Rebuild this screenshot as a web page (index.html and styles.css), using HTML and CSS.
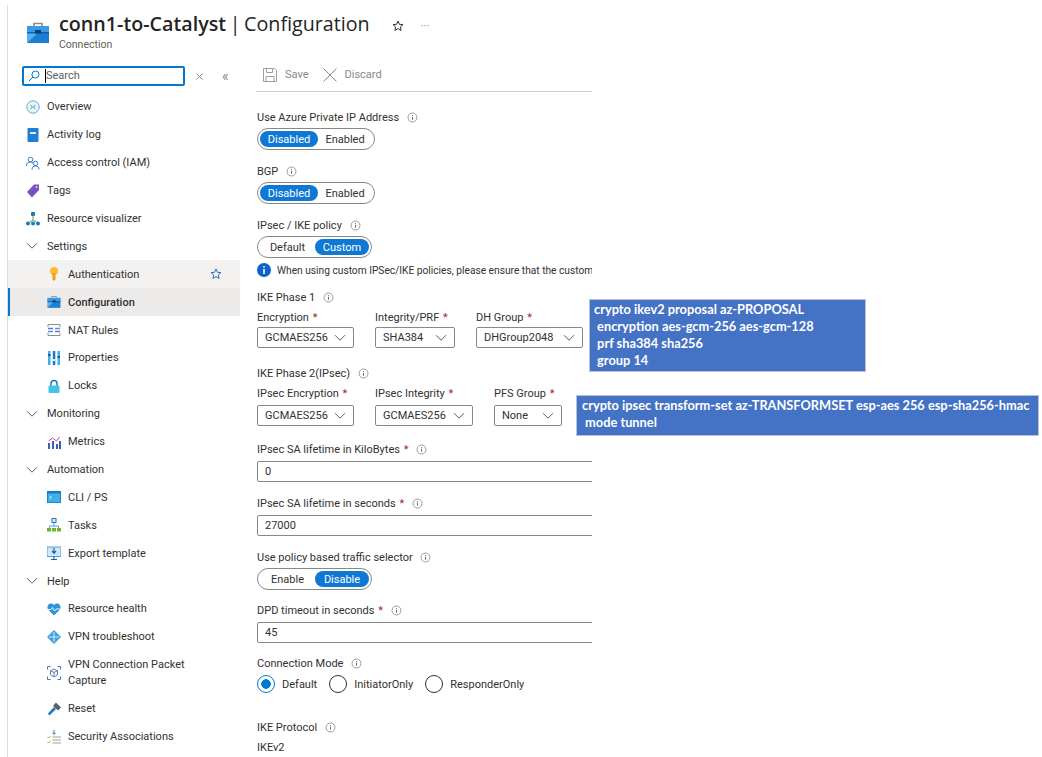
FILE: index.html
```html
<!DOCTYPE html>
<html lang="en">
<head>
    <meta charset="UTF-8">
    <title>conn1-to-Catalyst | Configuration</title>
    <link rel="stylesheet" href="styles.css">
</head>
<body>
    <!-- shared small icons -->
    <svg class="defs" width="0" height="0">
        <symbol id="info" viewBox="0 0 12 12">
            <circle cx="6" cy="6" r="4.900" fill="none" stroke="#8a8886" stroke-width="0.900"/>
            <path d="M6 5.200v3.200M6 3.400v.9" stroke="#605e5c" stroke-width="1"/>
        </symbol>
        <symbol id="chev" viewBox="0 0 12 8">
            <path d="M1 1.200l5 5 5-5" fill="none" stroke="#605e5c" stroke-width="1"/>
        </symbol>
        <symbol id="case" viewBox="0 0 24 24">
            <path d="M8 5V2.500h8V5" fill="none" stroke="#8a8f96" stroke-width="1.600"/>
            <rect x="1" y="5" width="22" height="17" fill="#1b7fd4"/>
            <rect x="1" y="5" width="22" height="6" fill="#3a9ae6"/>
            <path d="M1 11h22v1.500H1z" fill="#0f5fa8"/>
            <path d="M1 22l10-9.500H1z" fill="#6bbcf0" opacity="0.800"/>
            <rect x="9" y="9" width="6" height="3.500" fill="#0b3f70"/>
        </symbol>
    </svg>

    <div class="blade">
        <header class="head">
            <svg class="head-icon" width="24" height="24"><use href="#case"/></svg>
            <div>
                <h1 class="title"><b>conn1-to-Catalyst</b> | Configuration</h1>
                <div class="subtitle">Connection</div>
            </div>
            <svg class="head-star" width="12" height="12" viewBox="0 0 12 12"><path d="M6 1l1.400 3.300 3.600.3-2.700 2.400.8 3.500L6 8.600 2.900 10.500l.8-3.500L1 4.600l3.600-.3z" fill="none" stroke="#323130" stroke-width="1"/></svg>
            <span class="head-more">···</span>
        </header>

        <div class="columns">
            <nav class="side">
                <div class="search-row">
                    <div class="search">
                        <svg width="12" height="12" viewBox="0 0 12 12"><circle cx="7.500" cy="4.500" r="3.500" fill="none" stroke="#0078d4"/><path d="M5 7l-4 4" stroke="#0078d4"/></svg>
                        <span class="search-text">Search</span>
                    </div>
                    <svg class="search-x" width="7" height="7" viewBox="0 0 7 7"><path d="M.5.5l6 6M6.500.5l-6 6" stroke="#8a8886"/></svg>
                    <span class="collapse">«</span>
                </div>

                <a class="item">
                    <svg width="14" height="14" viewBox="0 0 14 14"><circle cx="7" cy="7" r="6.200" fill="#eaf5fc" stroke="#5ea9dd"/><path d="M4.500 5l2 2-2 2" fill="none" stroke="#3fa63f"/><path d="M9.500 5l-2 2 2 2" fill="none" stroke="#3b8fd1"/></svg>
                    Overview
                </a>
                <a class="item">
                    <svg width="14" height="14" viewBox="0 0 14 14"><rect x="1.500" width="11" height="14" rx="1" fill="#1f7fd0"/><rect x="4" y="4" width="6" height="2" fill="#d8ecfa"/></svg>
                    Activity log
                </a>
                <a class="item">
                    <svg width="14" height="14" viewBox="0 0 14 14"><g fill="none" stroke="#2f7fc9"><circle cx="4.500" cy="3.500" r="2.300"/><path d="M.5 10c0-3 1.500-4 4-4 1 0 2 .3 2.500 1"/><circle cx="9.500" cy="7.500" r="2.200"/><path d="M6 13.500c0-2.500 1.500-3.500 3.500-3.500s3.500 1 3.500 3.500"/></g></svg>
                    Access control (IAM)
                </a>
                <a class="item">
                    <svg width="14" height="14" viewBox="0 0 14 14"><path d="M1 8l7-7.500h5V6l-7 7.500z" fill="#7c4fc4"/><circle cx="10.500" cy="3" r="1" fill="#e6dcf7"/></svg>
                    Tags
                </a>
                <a class="item">
                    <svg width="14" height="14" viewBox="0 0 14 14"><path d="M7 3v5M2.500 11l4.500-3 4.500 3" fill="none" stroke="#5aa83c"/><rect x="5" width="4" height="4" rx="1" fill="#1c78c0"/><circle cx="2" cy="11.500" r="2" fill="#1c78c0"/><circle cx="7" cy="11.500" r="2" fill="#1c78c0"/><circle cx="12" cy="11.500" r="2" fill="#1c78c0"/></svg>
                    Resource visualizer
                </a>

                <a class="item group"><svg width="12" height="8"><use href="#chev"/></svg>Settings</a>
                <a class="item sub hover">
                    <svg width="14" height="14" viewBox="0 0 14 14"><circle cx="7" cy="4" r="4" fill="#fbb92c"/><path d="M5.500 6h3v6.500L7 14l-1.500-1.500z" fill="#f09c1a"/></svg>
                    Authentication
                    <svg class="fav" width="12" height="12" viewBox="0 0 12 12"><path d="M6 1l1.400 3.300 3.600.3-2.700 2.400.8 3.500L6 8.600 2.900 10.500l.8-3.500L1 4.600l3.600-.3z" fill="none" stroke="#2f6fc9"/></svg>
                </a>
                <a class="item sub active"><svg width="14" height="14"><use href="#case"/></svg><strong>Configuration</strong></a>
                <a class="item sub">
                    <svg width="14" height="14" viewBox="0 0 14 14"><path d="M1 4V1.500h12V4M1 10v2.500h12V10" fill="none" stroke="#8a8f96"/><path d="M1 5.500h5M13 8.500H8" stroke="#8661c5" stroke-width="1.500"/><path d="M8 5.500h5M6 8.500H1" stroke="#3b9ae1" stroke-width="1.500"/></svg>
                    NAT Rules
                </a>
                <a class="item sub">
                    <svg width="14" height="14" viewBox="0 0 14 14"><rect x="1" width="2.500" height="14" fill="#3fb0e6"/><rect x="5.800" width="2.500" height="14" fill="#1c78c0"/><rect x="10.500" width="2.500" height="14" fill="#3fb0e6"/><rect x="1" y="3" width="2.500" height="2" fill="#0f5fa8"/><rect x="5.800" y="8" width="2.500" height="2" fill="#d8ecfa"/><rect x="10.500" y="5" width="2.500" height="2" fill="#0f5fa8"/></svg>
                    Properties
                </a>
                <a class="item sub">
                    <svg width="14" height="14" viewBox="0 0 14 14"><path d="M4 7V4.500a3 3 0 0 1 6 0V7" fill="none" stroke="#1c78c0" stroke-width="1.500"/><rect x="1.500" y="6.500" width="11" height="7.500" rx="1" fill="#45c2e8"/></svg>
                    Locks
                </a>

                <a class="item group"><svg width="12" height="8"><use href="#chev"/></svg>Monitoring</a>
                <a class="item sub">
                    <svg width="14" height="14" viewBox="0 0 14 14"><path d="M1 14V8h2v6zM5 14V6h2v8zM9 14V9h2v5zM12 14V6h2v8z" fill="#3b5fb5"/><path d="M1.500 6L5.500 3l4 3 3-4" fill="none" stroke="#b04fc4"/></svg>
                    Metrics
                </a>

                <a class="item group"><svg width="12" height="8"><use href="#chev"/></svg>Automation</a>
                <a class="item sub">
                    <svg width="14" height="14" viewBox="0 0 14 14"><rect width="14" height="12" y="1" fill="#1c78c0"/><rect x=".8" y="3.500" width="12.400" height="8.800" fill="#3fb0e6"/><path d="M2.500 6l2 1.500-2 1.500" fill="none" stroke="#fff" stroke-width=".8"/></svg>
                    CLI / PS
                </a>
                <a class="item sub">
                    <svg width="14" height="14" viewBox="0 0 14 14"><path d="M7 5v3M2.500 10V8h9v2" fill="none" stroke="#5a9bd5"/><rect x="5" y=".5" width="4" height="4" fill="#d8ecfa" stroke="#1c78c0"/><rect y="10" width="4" height="3.500" fill="#6cb52d"/><rect x="5" y="10" width="4" height="3.500" fill="#6cb52d"/><rect x="10" y="10" width="4" height="3.500" fill="#6cb52d"/></svg>
                    Tasks
                </a>
                <a class="item sub">
                    <svg width="14" height="14" viewBox="0 0 14 14"><rect y="1" width="14" height="9.500" fill="#cfe6f7" stroke="#5a9bd5"/><path d="M7 2v5M5 5l2 2.300L9 5" fill="none" stroke="#1c5fa8" stroke-width="1.200"/><path d="M7 10.500V13M4 13.500h6" stroke="#1c5fa8" stroke-width="1.200"/></svg>
                    Export template
                </a>

                <a class="item group"><svg width="12" height="8"><use href="#chev"/></svg>Help</a>
                <a class="item sub">
                    <svg width="14" height="14" viewBox="0 0 14 14"><path d="M7 13.500L1 7.500C-.5 5 1 1.500 4 1.500c1.300 0 2.300.6 3 1.500.7-.9 1.700-1.500 3-1.500 3 0 4.500 3.500 3 6z" fill="#2f93dd"/><path d="M1 7.500h3l1.500-2 2 3.500 1.500-2h4" fill="none" stroke="#fff" stroke-width=".9"/></svg>
                    Resource health
                </a>
                <a class="item sub">
                    <svg width="14" height="14" viewBox="0 0 14 14"><path d="M7 0l7 7-7 7-7-7z" fill="#3f9fdf"/><path d="M7 2v10M2 7h10" stroke="#d8ecfa"/></svg>
                    VPN troubleshoot
                </a>
                <a class="item sub tall">
                    <svg width="14" height="14" viewBox="0 0 14 14"><path d="M.5 3.500v-3h3M10.500.5h3v3M13.500 10.500v3h-3M3.500 13.500h-3v-3" fill="none" stroke="#2f7fc9"/><path d="M7 3l3.500 1.700v4.200L7 11 3.500 8.900V4.700zM3.500 4.700L7 6.500l3.500-1.800M7 6.500V11" fill="none" stroke="#5b7fb5"/></svg>
                    <span>VPN Connection Packet<br>Capture</span>
                </a>
                <a class="item sub">
                    <svg width="14" height="14" viewBox="0 0 14 14"><path d="M7 5L1 11.500 2.500 13.500 9 7z" fill="#1c78c0"/><path d="M6 4l3-3.500 5 5L11 8.500z" fill="#5f5f5f"/></svg>
                    Reset
                </a>
                <a class="item sub">
                    <svg width="14" height="14" viewBox="0 0 14 14"><path d="M7 0v4M5.500 2.800L7 4.500l1.500-1.700" fill="none" stroke="#2f7fc9"/><path d="M5.500 7H14M5.500 10H14M5.500 13H14" stroke="#a19f9d" stroke-width="1.200"/><path d="M.5 7l1 1 2-2M.5 12l1 1 2-2" fill="none" stroke="#8cbf3f"/></svg>
                    Security Associations
                </a>
            </nav>

            <main class="main">
                <div class="toolbar">
                    <span class="tool save">
                        <svg width="14" height="14" viewBox="0 0 14 14"><path d="M.5.5h11l2 2v11H.5z M3.500.5v4h6v-4M3 13.500v-5h8v5" fill="none" stroke="#a19f9d"/></svg>
                        Save
                    </span>
                    <span class="tool">
                        <svg width="14" height="14" viewBox="0 0 14 14"><path d="M.5.5l13 13M13.500.5l-13 13" stroke="#8a8886"/></svg>
                        Discard
                    </span>
                </div>

                <div class="field first">
                    <label class="lbl">Use Azure Private IP Address <svg class="i"><use href="#info"/></svg></label>
                    <div class="pill pill-left"><span class="seg on">Disabled</span><span class="seg">Enabled</span></div>
                </div>
                <div class="field">
                    <label class="lbl">BGP <svg class="i"><use href="#info"/></svg></label>
                    <div class="pill pill-left"><span class="seg on">Disabled</span><span class="seg">Enabled</span></div>
                </div>
                <div class="field">
                    <label class="lbl">IPsec / IKE policy <svg class="i"><use href="#info"/></svg></label>
                    <div class="pill pill-right"><span class="seg">Default</span><span class="seg on">Custom</span></div>
                </div>
                <div class="note">
                    <svg width="14" height="14" viewBox="0 0 14 14"><circle cx="7" cy="7" r="7" fill="#0f62c9"/><path d="M7 6v5M7 3v1.600" stroke="#fff" stroke-width="1.600"/></svg>
                    <span>When using custom IPSec/IKE policies, please ensure that the custom</span>
                </div>

                <label class="lbl phase">IKE Phase 1 <svg class="i"><use href="#info"/></svg></label>
                <div class="selects">
                    <div class="sel-col">
                        <label class="lbl">Encryption <em>*</em></label>
                        <div class="sel w97">GCMAES256<svg width="12" height="8"><use href="#chev"/></svg></div>
                    </div>
                    <div class="sel-col">
                        <label class="lbl">Integrity/PRF <em>*</em></label>
                        <div class="sel w80">SHA384<svg width="12" height="8"><use href="#chev"/></svg></div>
                    </div>
                    <div class="sel-col">
                        <label class="lbl">DH Group <em>*</em></label>
                        <div class="sel w107">DHGroup2048<svg width="12" height="8"><use href="#chev"/></svg></div>
                    </div>
                </div>

                <label class="lbl phase two">IKE Phase 2(IPsec) <svg class="i"><use href="#info"/></svg></label>
                <div class="selects lower">
                    <div class="sel-col">
                        <label class="lbl">IPsec Encryption <em>*</em></label>
                        <div class="sel w97">GCMAES256<svg width="12" height="8"><use href="#chev"/></svg></div>
                    </div>
                    <div class="sel-col">
                        <label class="lbl">IPsec Integrity <em>*</em></label>
                        <div class="sel w98">GCMAES256<svg width="12" height="8"><use href="#chev"/></svg></div>
                    </div>
                    <div class="sel-col">
                        <label class="lbl">PFS Group <em>*</em></label>
                        <div class="sel w68">None<svg width="12" height="8"><use href="#chev"/></svg></div>
                    </div>
                </div>

                <div class="field after-sel">
                    <label class="lbl">IPsec SA lifetime in KiloBytes <em>*</em> <svg class="i"><use href="#info"/></svg></label>
                    <div class="input">0</div>
                </div>
                <div class="field">
                    <label class="lbl">IPsec SA lifetime in seconds <em>*</em> <svg class="i"><use href="#info"/></svg></label>
                    <div class="input">27000</div>
                </div>
                <div class="field">
                    <label class="lbl">Use policy based traffic selector <svg class="i"><use href="#info"/></svg></label>
                    <div class="pill pill-right"><span class="seg">Enable</span><span class="seg on">Disable</span></div>
                </div>
                <div class="field tight">
                    <label class="lbl">DPD timeout in seconds <em>*</em> <svg class="i"><use href="#info"/></svg></label>
                    <div class="input">45</div>
                </div>
                <div class="field tight">
                    <label class="lbl">Connection Mode <svg class="i"><use href="#info"/></svg></label>
                    <div class="radios">
                        <span class="radio checked">Default</span>
                        <span class="radio">InitiatorOnly</span>
                        <span class="radio">ResponderOnly</span>
                    </div>
                </div>
                <div class="field proto">
                    <label class="lbl">IKE Protocol <svg class="i"><use href="#info"/></svg></label>
                    <div class="value">IKEv2</div>
                </div>
            </main>
        </div>
    </div>

    <div class="callout box-one">crypto ikev2 proposal az-PROPOSAL<br>&nbsp;encryption aes-gcm-256 aes-gcm-128<br>&nbsp;prf sha384 sha256<br>&nbsp;group 14</div>
    <div class="callout box-two">crypto ipsec transform-set az-TRANSFORMSET esp-aes 256 esp-sha256-hmac<br>&nbsp;mode tunnel</div>
</body>
</html>
```

FILE: styles.css
```css
* {
    box-sizing: border-box;
}

body {
    margin: 0;
    height: 757px;
    overflow: hidden;
    position: relative;
    background: #fff;
    color: #323130;
    font-family: Roboto, sans-serif;
    font-size: 11px;
}

.defs {
    position: absolute;
}

.blade {
    margin: 5px 0 0 7px;
    width: 585px;
    height: 752px;
    border-left: 1px solid #e1dfdd;
}

/* header */
.head {
    height: 55px;
    padding: 2px 0 0 18px;
    display: flex;
    align-items: flex-start;
}

.head-icon {
    margin: 14px 9px 0 0;
}

.title {
    margin: 3px 0 0;
    font-family: "Open Sans", sans-serif;
    font-size: 19.7px;
    line-height: 27px;
    font-weight: 400;
    white-space: nowrap;
    word-spacing: -1.5px;
    color: #252423;
}

.title b {
    font-weight: 600;
    word-spacing: 0;
}

.subtitle {
    font-size: 10.5px;
    line-height: 15px;
    color: #605e5c;
}

.head-star {
    margin: 13px 0 0 22px;
}

.head-more {
    margin: 13px 0 0 17px;
    color: #8a8886;
    font-size: 11px;
}

.columns {
    display: flex;
}

/* left menu */
.side {
    width: 232px;
    flex: none;
}

.search-row {
    display: flex;
    align-items: center;
    padding: 6px 0 0 14px;
    height: 26px;
    margin-bottom: 7px;
}

.search {
    width: 163px;
    height: 20px;
    border: 2px solid #0078d4;
    border-radius: 2px;
    display: flex;
    align-items: center;
    padding-left: 4px;
}

.search-text {
    margin-left: 5px;
    border-left: 1px solid #000;
    color: #605e5c;
    line-height: 14px;
}

.search-x {
    margin-left: 11px;
}

.collapse {
    margin-left: 19px;
    color: #8a8886;
    font-size: 14px;
    line-height: 14px;
}

.item {
    height: 27.9px;
    display: flex;
    align-items: center;
    gap: 7px;
    padding-left: 18px;
    white-space: nowrap;
    color: #323130;
}

.item.group svg {
    margin-right: 2px;
}

.item.sub {
    padding-left: 39px;
}

.item.tall {
    height: 44px;
    line-height: 16px;
}

.item.hover {
    background: #f3f2f1;
}

.item.active {
    background: #edebe9;
    border-left: 2px solid #0078d4;
    padding-left: 37px;
}

.item.active strong {
    font-weight: 500;
}

.fav {
    margin-left: auto;
    margin-right: 18px;
}

/* form column */
.main {
    width: 336px;
    flex: none;
    margin-left: 16px;
    overflow: hidden;
    white-space: nowrap;
}

.toolbar {
    height: 32px;
    border-bottom: 1px solid #d2d0ce;
    display: flex;
    align-items: center;
    gap: 14px;
    padding: 0 0 2px 7px;
}

.tool {
    display: flex;
    align-items: center;
    gap: 8px;
    color: #8a8886;
}

.lbl {
    display: block;
    height: 16px;
    line-height: 16px;
    padding-left: 1px;
}

.lbl em {
    color: #a4262c;
    font-style: normal;
    margin-left: 1px;
}

.i {
    width: 11px;
    height: 11px;
    margin-left: 5px;
    vertical-align: -2px;
}

.field {
    margin-top: 14px;
}

.field.first {
    margin-top: 18px;
}

.field.tight {
    margin-top: 13px;
}

.field.after-sel {
    margin-top: 16px;
}

.field.proto {
    margin-top: 27px;
}

.field .lbl {
    margin-bottom: 2px;
}

.pill {
    height: 22px;
    padding: 2px;
    border: 1px solid #8a8886;
    border-radius: 11px;
    display: flex;
    align-items: stretch;
    margin-left: 1px;
    line-height: 15px;
}

.pill-left {
    width: 118px;
}

.pill-right {
    width: 115px;
}

.seg {
    flex: 1;
    display: flex;
    align-items: center;
    justify-content: center;
    border-radius: 9px;
    color: #323130;
}

.seg.on {
    background: #0f78d4;
    color: #fff;
}

.pill-left .seg.on {
    flex: none;
    width: 58px;
}

.pill-right .seg.on {
    flex: none;
    width: 54px;
}

.note {
    display: flex;
    align-items: center;
    gap: 6px;
    margin-top: 4px;
    height: 16px;
    padding-left: 1px;
    font-size: 10.2px;
}

.note svg {
    flex: none;
}

.phase {
    margin-top: 12px;
}

.phase.two {
    margin-top: 18px;
}

.selects {
    display: flex;
    gap: 21px;
    margin: 4px 0 0 1px;
}

.sel-col .lbl {
    padding-left: 0;
    margin-bottom: 1px;
}

.selects.lower .lbl {
    margin-bottom: 3px;
}

.sel {
    height: 21px;
    padding: 0 7px;
    border: 1px solid #8a8886;
    border-radius: 2px;
    display: flex;
    align-items: center;
    justify-content: space-between;
}

.w68 { width: 68px; }
.w80 { width: 80px; }
.w97 { width: 97px; }
.w98 { width: 98px; }
.w107 { width: 107px; }

.input {
    width: 420px;
    height: 21px;
    margin: 3px 0 0 1px;
    padding-left: 7px;
    line-height: 19px;
    border: 1px solid #8a8886;
    border-radius: 2px;
}

.radios {
    display: flex;
    gap: 12px;
    height: 18px;
    margin: 3px 0 0 1px;
}

.radio {
    display: flex;
    align-items: center;
    gap: 7px;
}

.radio::before {
    content: "";
    width: 16px;
    height: 16px;
    border: 1px solid #323130;
    border-radius: 50%;
    background: #fff;
}

.radio.checked::before {
    border-color: #0078d4;
    background: radial-gradient(circle, #0078d4 0 4.5px, #fff 5px);
}

.value {
    line-height: 16px;
    margin-top: 4px;
    padding-left: 1px;
}

/* notes pasted over the screenshot */
.callout {
    position: absolute;
    background: #4472c4;
    border: 1px solid #b4c2dc;
    color: #fff;
    font-family: Lato, sans-serif;
    font-weight: 700;
    font-size: 12.8px;
    line-height: 17px;
    white-space: nowrap;
    padding: 1px 4px;
}

.box-one {
    left: 589px;
    top: 299px;
    width: 277px;
    height: 73px;
}

.box-two {
    left: 576px;
    top: 395px;
    width: 463px;
    height: 41px;
    padding-left: 5px;
}
```
